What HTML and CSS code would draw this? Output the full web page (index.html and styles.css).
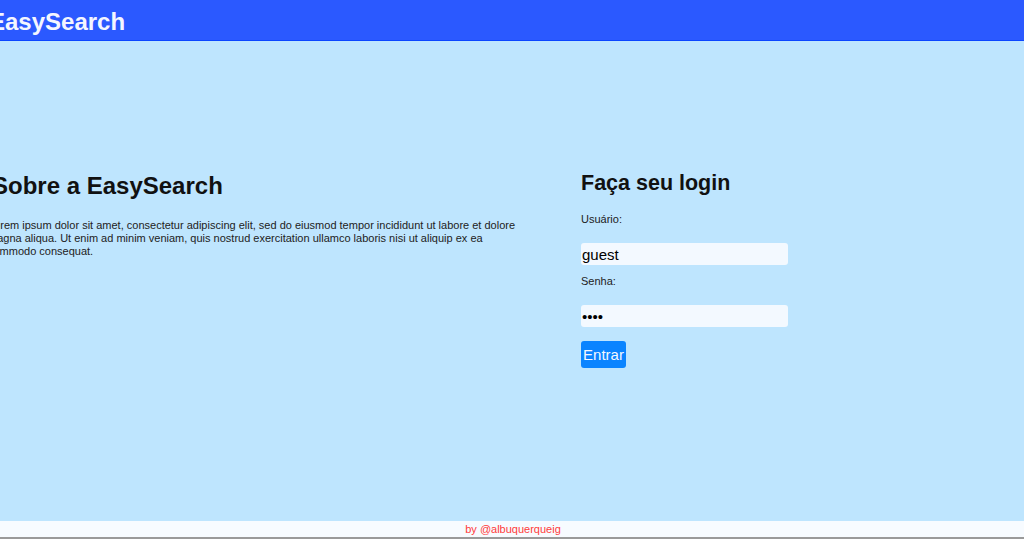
FILE: index.html
```html
<!DOCTYPE html>
<html lang="pt">
<head>
<meta charset="utf-8">
<title>EasySearch</title>
<link rel="stylesheet" href="styles.css">
</head>
<body>
<header class="topbar">
  <h1 class="brand">EasySearch</h1>
</header>
<main class="main">
  <section class="about">
    <h2 class="about-title">Sobre a EasySearch</h2>
    <p class="about-text">Lorem ipsum dolor sit amet, consectetur adipiscing elit, sed do eiusmod tempor incididunt ut labore et dolore magna aliqua. Ut enim ad minim veniam, quis nostrud exercitation ullamco laboris nisi ut aliquip ex ea commodo consequat.</p>
  </section>
  <section class="login">
    <h2 class="login-title">Faça seu login</h2>
    <form class="login-form">
      <label class="field-label" for="user">Usuário:</label>
      <input class="field-input" id="user" type="text" value="guest">
      <label class="field-label" for="pass">Senha:</label>
      <input class="field-input" id="pass" type="password" value="1234">
      <button class="btn" type="button">Entrar</button>
    </form>
  </section>
</main>
<footer class="footer">by @albuquerqueig</footer>
</body>
</html>
```

FILE: styles.css
```css
* { box-sizing: border-box; }
html, body { margin: 0; padding: 0; }
body {
  font-family: "Liberation Sans", Arial, sans-serif;
  width: 1024px;
  height: 539px;
  overflow: hidden;
  background: #bee5fe;
}
.topbar {
  height: 41px;
  background: #2b59ff;
  border-bottom: 1px solid #0c46ff;
  display: flex;
  align-items: center;
}
.brand {
  margin: 3px 0 0 -11px;
  font-size: 24px;
  font-weight: bold;
  color: #f4f6ff;
  line-height: 40px;
}
.main {
  height: 480px;
  display: flex;
  align-items: flex-start;
  padding-top: 130px;
}
.about {
  margin-left: -10px;
  width: 528px;
}
.about-title {
  margin: 0 0 18px 2px;
  font-size: 24px;
  line-height: 30px;
  font-weight: bold;
  color: #111;
}
.about-text {
  margin: 0 0 0 -2px;
  font-size: 11px;
  line-height: 13px;
  color: #222;
}
.login {
  margin-left: 63px;
  width: 207px;
}
.login-title {
  margin: -1px 0 17px 0;
  font-size: 21.5px;
  line-height: 26px;
  font-weight: bold;
  color: #111;
}
.login-form { display: flex; flex-direction: column; align-items: flex-start; }
.field-label {
  font-size: 11px;
  line-height: 13px;
  color: #222;
  margin-bottom: 17px;
}
.field-input {
  width: 207px;
  height: 22px;
  border: none;
  border-radius: 3px;
  background: #f3f9ff;
  padding: 0 1px;
  font-family: "Liberation Sans", Arial, sans-serif;
  font-size: 15px;
  color: #000;
  margin: 0 0 10px 0;
  outline: none;
}
.btn {
  margin-top: 4px;
  width: 45px;
  height: 27px;
  border: none;
  border-radius: 3px;
  background: #0a84ff;
  color: #f4f8ff;
  font-family: "Liberation Sans", Arial, sans-serif;
  font-size: 15px;
  padding: 0;
}
.footer {
  height: 18px;
  background: #f7fbff;
  border-bottom: 2px solid #9a9a9a;
  color: #ff3b3b;
  font-size: 11px;
  line-height: 16px;
  text-align: center;
  padding-left: 2px;
}
```
